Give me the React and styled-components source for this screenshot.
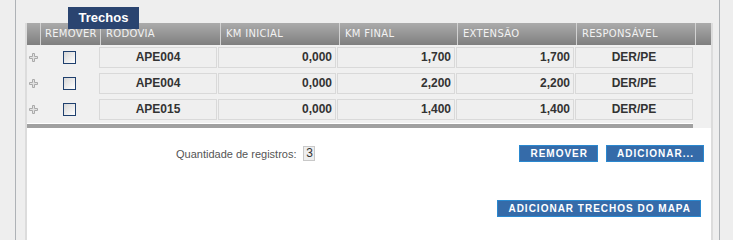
import React from "react";
import styled, { createGlobalStyle } from "styled-components";

const Global = createGlobalStyle`
  html, body { margin: 0; padding: 0; background: #eeeeee; overflow: hidden; }
  * { box-sizing: border-box; }
`;

const Frame = styled.div`
  margin-left: 15px;
  width: 705px;
  height: 100vh;
  min-height: 220px;
  border-left: 1px solid #aeb2b6;
  border-right: 1px solid #aeb2b6;
  padding: 7px 8px 0 11px;
  display: flex;
  flex-direction: column;
`;

const TabTitle = styled.div`
  position: relative;
  z-index: 1;
  align-self: flex-start;
  margin-left: 41px;
  width: 71px;
  height: 22px;
  background: #2a4470;
  color: #ffffff;
  font: bold 13px "Liberation Sans", Arial, sans-serif;
  line-height: 21px;
  text-align: center;
`;

const Panel = styled.div`
  margin-top: -6px;
  flex: 1;
  display: flex;
  flex-direction: column;
  box-shadow: -2px 0 0 #dcdcdc, 2px 0 0 #dcdcdc;
`;

const HeaderRow = styled.div`
  display: grid;
  grid-template-columns: 13px 59px 119px 118px 117px 118px 118px 15px;
  column-gap: 1px;
  background: #d2d2d2;
  height: 22px;
`;

const HeaderCell = styled.div`
  background: linear-gradient(#ababab, #7f7f7f);
  color: #f2f2f2;
  font: 10px "DejaVu Sans", Verdana, sans-serif;
  letter-spacing: 0.3px;
  line-height: 22px;
  padding-left: ${(p) => (p.$pad ?? 5)}px;
  white-space: nowrap;
  overflow: hidden;
`;

const Body = styled.div`
  background: #f0f0f0;
`;

const Row = styled.div`
  display: grid;
  grid-template-columns: 13px 57px repeat(5, 118px);
  column-gap: 1px;
  height: 26px;
  padding-top: 2px;
  align-items: start;
`;

const IconCell = styled.div`
  height: 21px;
  display: flex;
  align-items: center;
  justify-content: center;
`;

const Checkbox = styled.span`
  display: block;
  width: 13px;
  height: 13px;
  border: 1px solid #1f406e;
  background: linear-gradient(135deg, #d6d6d6, #ffffff);
`;

const Cell = styled.div`
  height: 21px;
  border: 1px solid #d9d9d9;
  background: #efefef;
  color: #333333;
  font: bold 12px "Liberation Sans", Arial, sans-serif;
  line-height: 19px;
  text-align: ${(p) => (p.$num ? "right" : "center")};
  padding: 0 3px;
`;

const Bar = styled.div`
  width: 666px;
  height: 5px;
  border-top: 1px solid #ffffff;
  background: #a0a0a0;
`;

const Footer = styled.div`
  flex: 1;
  background: #ffffff;
  padding: 17px 7px 0 0;
  display: flex;
  flex-direction: column;
`;

const ActionsRow = styled.div`
  display: flex;
  align-items: center;
`;

const Counter = styled.div`
  margin-left: 149px;
  display: flex;
  align-items: center;
  gap: 7px;
  font: 11px "Liberation Sans", Arial, sans-serif;
  color: #555555;
`;

const CountBox = styled.span`
  display: block;
  width: 12px;
  height: 15px;
  border: 1px solid #c8c8c8;
  background: #eeeeee;
  color: #333333;
  font: 12px "Liberation Sans", Arial, sans-serif;
  line-height: 13px;
  text-align: center;
`;

const Buttons = styled.div`
  margin-left: auto;
  display: flex;
  gap: 8px;
`;

const Button = styled.button`
  height: 17px;
  padding: 0 9px 0 10px;
  margin: 0;
  border: 1px solid #2a88cf;
  background: #356ba9;
  color: #ffffff;
  font: bold 10px "Liberation Sans", Arial, sans-serif;
  letter-spacing: 1px;
  line-height: 15px;
  cursor: pointer;
`;

const MapButtonRow = styled.div`
  margin-top: 38px;
  display: flex;
  justify-content: flex-end;
  padding-right: 3px;
`;

const PlusIcon = () => (
  <svg width="9" height="9" viewBox="0 0 9 9">
    <polygon
      points="3.5,0.5 5.5,0.5 5.5,3.5 8.5,3.5 8.5,5.5 5.5,5.5 5.5,8.5 3.5,8.5 3.5,5.5 0.5,5.5 0.5,3.5 3.5,3.5"
      fill="#e2e2e2"
      stroke="#aaaaaa"
      strokeWidth="1"
    />
  </svg>
);

const rows = [
  { rod: "APE004", ini: "0,000", fim: "1,700", ext: "1,700", resp: "DER/PE" },
  { rod: "APE004", ini: "0,000", fim: "2,200", ext: "2,200", resp: "DER/PE" },
  { rod: "APE015", ini: "0,000", fim: "1,400", ext: "1,400", resp: "DER/PE" },
];

export default function App() {
  return (
    <>
      <Global />
      <Frame>
        <TabTitle>Trechos</TabTitle>
        <Panel>
          <HeaderRow>
            <HeaderCell />
            <HeaderCell $pad={4}>REMOVER</HeaderCell>
            <HeaderCell>RODOVIA</HeaderCell>
            <HeaderCell>KM INICIAL</HeaderCell>
            <HeaderCell>KM FINAL</HeaderCell>
            <HeaderCell>EXTENSÃO</HeaderCell>
            <HeaderCell>RESPONSÁVEL</HeaderCell>
            <HeaderCell />
          </HeaderRow>
          <Body>
            {rows.map((r, i) => (
              <Row key={i}>
                <IconCell>
                  <PlusIcon />
                </IconCell>
                <IconCell>
                  <Checkbox />
                </IconCell>
                <Cell>{r.rod}</Cell>
                <Cell $num>{r.ini}</Cell>
                <Cell $num>{r.fim}</Cell>
                <Cell $num>{r.ext}</Cell>
                <Cell>{r.resp}</Cell>
              </Row>
            ))}
            <Bar />
          </Body>
          <Footer>
            <ActionsRow>
              <Counter>
                Quantidade de registros:
                <CountBox>3</CountBox>
              </Counter>
              <Buttons>
                <Button>REMOVER</Button>
                <Button>ADICIONAR...</Button>
              </Buttons>
            </ActionsRow>
            <MapButtonRow>
              <Button>ADICIONAR TRECHOS DO MAPA</Button>
            </MapButtonRow>
          </Footer>
        </Panel>
      </Frame>
    </>
  );
}
